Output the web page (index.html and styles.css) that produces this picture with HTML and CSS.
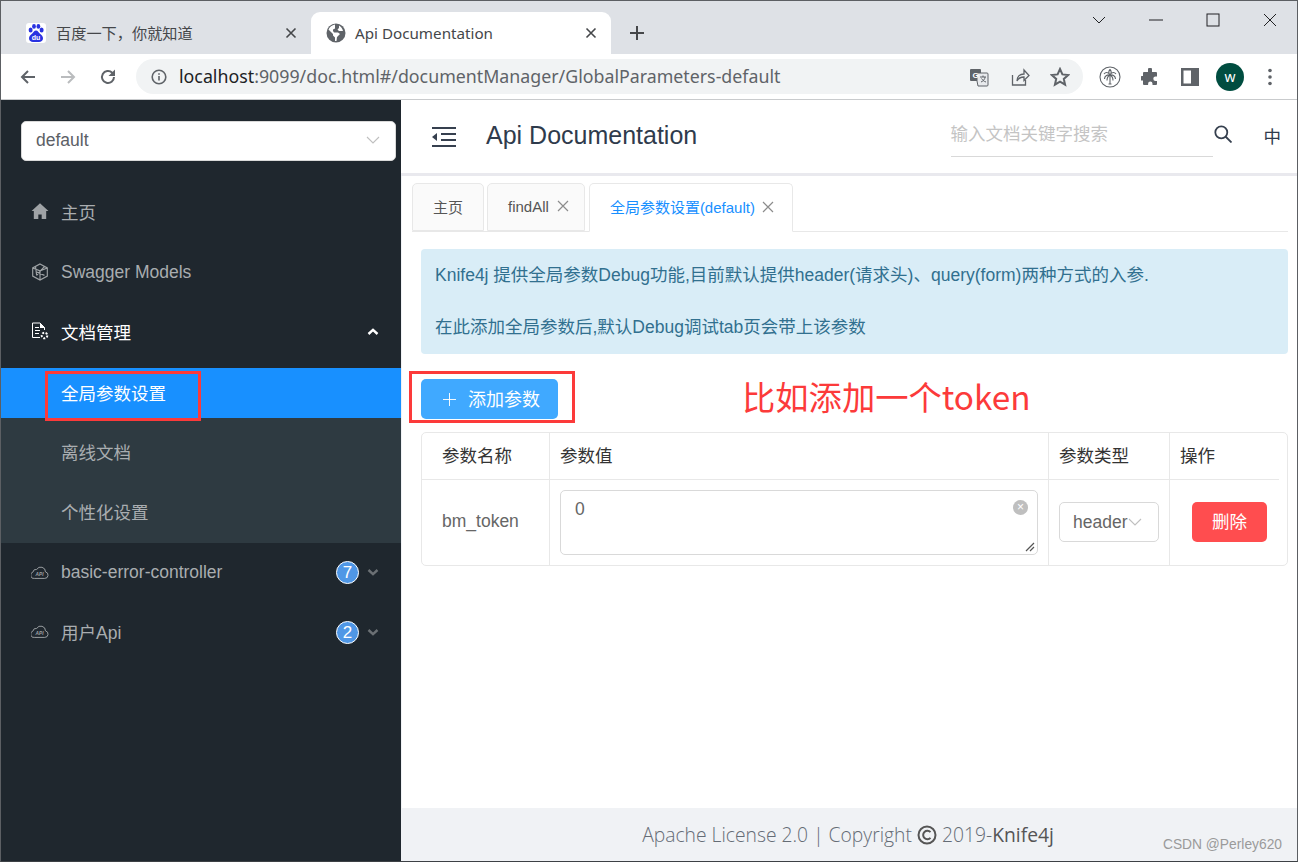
FILE: index.html
```html
<!DOCTYPE html>
<html lang="zh-CN">
<head>
    <meta charset="UTF-8">
    <title>Api Documentation</title>
    <link rel="stylesheet" href="styles.css">
</head>
<body>
<div class="window">
    <div class="tabstrip">
        <div class="tab">
            <svg class="favicon" viewBox="0 0 20 20"><rect width="20" height="20" rx="3" fill="#fff"/><g fill="#2932e1"><ellipse cx="4.6" cy="7" rx="2" ry="2.5"/><ellipse cx="8" cy="3.4" rx="1.9" ry="2.4"/><ellipse cx="12.4" cy="3.4" rx="1.9" ry="2.4"/><ellipse cx="15.6" cy="7" rx="2" ry="2.5"/><path d="M10 7.5c-2 0-2.6 2-4 3.2C4.400 12 3 13.200 3 15.200 3 17.800 5 19 7 19h6c2 0 4-1.200 4-3.800 0-2-1.400-3.200-3-4.500-1.400-1.200-2-3.200-4-3.200z"/></g><text x="10" y="17" class="favicon-du">du</text></svg>
            <span class="tab-title tab-title-cjk">百度一下，你就知道</span>
            <svg class="tab-close" viewBox="0 0 12 12"><path d="M1.500 1.500l9 9M10.500 1.500l-9 9"/></svg>
        </div>
        <div class="tab tab-active">
            <svg class="favicon" viewBox="0 0 20 20"><circle cx="10" cy="10" r="9.500" fill="#5f6368"/><path fill="#fff" d="M9 1.500C6 2 3.500 4 2.500 6.500L7 11v1.500l2 2V18h1.500l.5-4 3-3-2-1.500H8L7 8V6.500l2-1zM13 2.500v2.500l-1.500 1.500 1.500 1.500h4C16.500 5.500 15 3.500 13 2.500z"/></svg>
            <span class="tab-title">Api Documentation</span>
            <svg class="tab-close" viewBox="0 0 12 12"><path d="M1.500 1.500l9 9M10.500 1.500l-9 9"/></svg>
        </div>
        <svg class="new-tab" viewBox="0 0 16 16"><path d="M8 1v14M1 8h14"/></svg>
        <div class="win-controls">
            <svg viewBox="0 0 14 14"><path d="M1 4l6 6 6-6"/></svg>
            <svg viewBox="0 0 14 14"><path d="M0 7h14"/></svg>
            <svg viewBox="0 0 14 14"><rect x="1" y="1" width="12" height="12"/></svg>
            <svg viewBox="0 0 14 14"><path d="M1 1l12 12M13 1L1 13"/></svg>
        </div>
    </div>
    <div class="toolbar">
        <div class="tool"><svg viewBox="0 0 18 18"><path class="ink" d="M16 9H3M9 3L3 9l6 6"/></svg></div>
        <div class="tool"><svg viewBox="0 0 18 18"><path class="ink faded" d="M2 9h13M9 3l6 6-6 6"/></svg></div>
        <div class="tool"><svg viewBox="0 0 18 18"><path class="ink" d="M15 9a6 6 0 1 1-1.800-4.300L15 6.500"/><path class="fill" d="M16 1.500V8h-6.500z"/></svg></div>
        <div class="address">
            <svg class="info" viewBox="0 0 16 16"><circle cx="8" cy="8" r="6.800"/><path d="M8 7v4.500M8 4.200v1.600"/></svg>
            <span class="url"><b>localhost</b>:9099/doc.html#/documentManager/GlobalParameters-default</span>
            <div class="addr-icons">
                <svg viewBox="0 0 20 20"><rect x="1" y="2" width="11" height="12" rx="1" fill="#5f6368"/><path d="M8 6h10a1 1 0 0 1 1 1v11a1 1 0 0 1-1 1H9l-1-5z" fill="#e8eaed" stroke="#5f6368"/><text x="6.500" y="11" class="g-letter">G</text><path d="M11 10h6M14 8.500V10M12 15c2.500-1 4-3 4-5M12.500 11.500c1 1.500 2.500 3 4.500 3.500" fill="none" stroke="#5f6368"/></svg>
                <svg viewBox="0 0 20 20"><path class="ink thin" d="M2.500 8v10h13v-5M7 14c0-4.500 3-7 7-7V3l5 5.500-5 5V10c-3 0-5.500 1-7 4z"/></svg>
                <svg viewBox="0 0 20 20"><path class="ink" d="M10 2l2.400 5.400 5.800.6-4.400 3.900 1.300 5.800L10 14.700l-5.100 3 1.300-5.800L1.800 8l5.800-.6z"/></svg>
            </div>
        </div>
        <div class="tool"><svg viewBox="0 0 22 22"><circle class="thin-line" cx="11" cy="11" r="10"/><path class="thin-line" d="M11 9v9M9.500 18h3M11 9C9 5.500 6.500 6 5 8M11 9c2-3.500 4.500-3 6-1M11 9C8 8.500 5.500 10 5.500 13M11 9c3-.5 5.500 1 5.500 4M11 9c-1.500-2-1.500-4 0-5.500M11 9c1.500-2 1.500-4 0-5.500M11 9c-2 1-3 3-3 5.500M11 9c2 1 3 3 3 5.500"/></svg></div>
        <div class="tool"><svg viewBox="0 0 18 18"><path class="fill" d="M7 1.500a2 2 0 0 1 4 0V4h4a1 1 0 0 1 1 1v3.500h-1.500a2.200 2.200 0 0 0 0 4.400H16V16a1 1 0 0 1-1 1h-3.500v-1.300a2.200 2.200 0 0 0-4.400 0V17H3a1 1 0 0 1-1-1v-3.500H.8a2.200 2.200 0 0 1 0-4.400H2V5a1 1 0 0 1 1-1h4z"/></svg></div>
        <div class="tool"><svg viewBox="0 0 18 18"><path class="fill" fill-rule="evenodd" d="M0 0h18v18H0zM2.500 2.500v13H10v-13z"/></svg></div>
        <div class="tool"><span class="avatar">w</span></div>
        <div class="tool"><svg viewBox="0 0 18 18"><circle class="fill" cx="9" cy="2.500" r="1.800"/><circle class="fill" cx="9" cy="9" r="1.800"/><circle class="fill" cx="9" cy="15.500" r="1.800"/></svg></div>
    </div>
    <div class="app">
        <aside class="sidebar">
            <div class="project-select">
                <span>default</span>
                <svg class="chevron-thin" viewBox="0 0 14 8"><path d="M1 1l6 6 6-6"/></svg>
            </div>
            <ul class="menu">
                <li class="menu-item menu-cjk">
                    <svg class="menu-icon" viewBox="0 0 16 16"><path class="solid" d="M8 1L0.500 8H2.500v7h4v-4h3v4h4V8h2z"/></svg>
                    主页
                </li>
                <li class="menu-item">
                    <svg class="menu-icon" viewBox="0 0 16 16"><path class="line" d="M8 .8l6.500 3.600v7.200L8 15.200l-6.500-3.600V4.400zM1.500 4.400L8 7l6.500-2.600M8 7v8M4 3L5 11M12 3l-7 8M5 8l7 3"/></svg>
                    Swagger Models
                </li>
                <li class="menu-item menu-cjk menu-open">
                    <svg class="menu-icon" viewBox="0 0 18 18"><path class="line white" d="M9 15.500H1.500V1H9l4.500 4.500V8M4 5.500h4M4 8.500h5M4 11.500h4"/><path class="solid white" d="M9 1v5h5z"/><circle class="line white gear" cx="13.500" cy="13.500" r="2.800"/></svg>
                    文档管理
                    <svg class="menu-arrow white-arrow" viewBox="0 0 12 8"><path d="M1.500 6L6 1.800 10.500 6"/></svg>
                </li>
                <li class="submenu">
                    <div class="sub-item sub-active"><span class="mark">全局参数设置</span></div>
                    <div class="sub-item">离线文档</div>
                    <div class="sub-item">个性化设置</div>
                </li>
                <li class="menu-item">
                    <svg class="menu-icon cloud" viewBox="1 0 19 13.500"><path class="line" d="M5 13h10.500a3.500 3.500 0 0 0 .8-6.900A5 5 0 0 0 7 3.500a3.500 3.500 0 0 0-4 2.800A3.500 3.500 0 0 0 5 13z"/><text x="10" y="10.500" class="cloud-text">API</text></svg>
                    basic-error-controller
                    <span class="count">7</span>
                    <svg class="menu-arrow" viewBox="0 0 12 8"><path d="M1.500 2L6 6.200 10.500 2"/></svg>
                </li>
                <li class="menu-item menu-cjk">
                    <svg class="menu-icon cloud" viewBox="1 0 19 13.500"><path class="line" d="M5 13h10.500a3.500 3.500 0 0 0 .8-6.900A5 5 0 0 0 7 3.500a3.500 3.500 0 0 0-4 2.800A3.500 3.500 0 0 0 5 13z"/><text x="10" y="10.500" class="cloud-text">API</text></svg>
                    用户Api
                    <span class="count">2</span>
                    <svg class="menu-arrow" viewBox="0 0 12 8"><path d="M1.500 2L6 6.200 10.500 2"/></svg>
                </li>
            </ul>
        </aside>
        <main class="main">
            <header class="topbar">
                <svg class="collapse" viewBox="0 0 24 20"><path d="M0 1h24M9 7h15M9 13h15M0 19h24" /><path class="arrow" d="M5 6v8L0 10z"/></svg>
                <h1 class="app-title">Api Documentation</h1>
                <div class="search">输入文档关键字搜索</div>
                <svg class="search-icon" viewBox="0 0 18 18"><circle cx="7.300" cy="7.300" r="6"/><path d="M11.500 11.500l6 6"/></svg>
                <span class="lang">中</span>
            </header>
            <div class="content">
                <div class="tabs">
                    <div class="page-tab">主页</div>
                    <div class="page-tab page-tab-close">findAll <svg class="x" viewBox="0 0 12 12"><path d="M1 1l10 10M11 1L1 11"/></svg></div>
                    <div class="page-tab page-tab-active">全局参数设置(default) <svg class="x" viewBox="0 0 12 12"><path d="M1 1l10 10M11 1L1 11"/></svg></div>
                </div>
                <div class="pane">
                    <div class="alert">
                        <p>Knife4j 提供全局参数Debug功能,目前默认提供header(请求头)、query(form)两种方式的入参.</p>
                        <p>在此添加全局参数后,默认Debug调试tab页会带上该参数</p>
                    </div>
                    <div class="actions">
                        <div class="btn-mark">
                            <button class="btn-add"><svg viewBox="0 0 14 14"><path d="M7 0v14M0 7h14"/></svg><span class="btn-add-text">添加参数</span></button>
                        </div>
                        <span class="note">比如添加一个token</span>
                    </div>
                    <div class="param-table">
                        <div class="cell cell-head">参数名称</div>
                        <div class="cell cell-head">参数值</div>
                        <div class="cell cell-head">参数类型</div>
                        <div class="cell cell-head">操作</div>
                        <div class="cell cell-name">bm_token</div>
                        <div class="cell cell-value">
                            <div class="textarea">
                                0
                                <span class="clear">×</span>
                                <svg class="resize" viewBox="0 0 10 10"><path d="M1 9l8-8M5 9l4-4"/></svg>
                            </div>
                        </div>
                        <div class="cell cell-type">
                            <div class="type-select">header<svg class="chevron-thin" viewBox="0 0 14 8"><path d="M1 1l6 6 6-6"/></svg></div>
                        </div>
                        <div class="cell cell-op"><button class="btn-del">删除</button></div>
                    </div>
                </div>
            </div>
            <footer class="footer">
                <span>Apache License 2.0 | Copyright <svg class="copy" viewBox="0 0 20 20"><circle cx="10" cy="10" r="8.500"/><path d="M13.500 7.200a4.200 4.200 0 1 0 0 5.600"/></svg> 2019-<em>Knife4j</em></span>
                <span class="watermark">CSDN @Perley620</span>
            </footer>
        </main>
    </div>
</div>
</body>
</html>
```
FILE: styles.css
```css
* {
    box-sizing: border-box;
}
html, body {
    margin: 0;
    height: 100%;
    overflow: hidden;
}
body {
    font-family: "Liberation Sans", "Noto Sans CJK SC", sans-serif;
    font-size: 17.5px;
    background: #fff;
}
ul {
    list-style: none;
    margin: 0;
    padding: 0;
}
p {
    margin: 0;
}
button {
    font-family: inherit;
    border: 0;
}
.window {
    width: 1298px;
    height: 862px;
    display: flex;
    flex-direction: column;
    border-top: 1px solid #5c5f63;
    border-left: 1px solid #5c5f63;
    border-right: 1px solid #5c5f63;
    border-bottom: 1px solid #3d4145;
}

/* browser chrome */
.tabstrip {
    height: 53px;
    flex: none;
    background: #dee1e6;
    display: flex;
    align-items: flex-end;
    padding-left: 25px;
    font-family: "Noto Sans", "Noto Sans CJK SC", sans-serif;
    font-size: 15.2px;
    color: #45474a;
}
.tab {
    width: 285px;
    height: 42px;
    display: flex;
    align-items: center;
}
.tab-active {
    width: 300px;
    background: #fff;
    border-radius: 9px 9px 0 0;
    padding-left: 15px;
}
.tab-active .favicon {
    margin-right: 9px;
}
.favicon {
    width: 20px;
    height: 20px;
    flex: none;
    margin-right: 10px;
}
.favicon-du {
    font: bold 7px "Liberation Sans", sans-serif;
    fill: #fff;
    text-anchor: middle;
}
.tab-title {
    flex: 1;
}
.tab-title-cjk {
    padding-bottom: 2px;
}
.tab-close {
    width: 12px;
    height: 12px;
    fill: none;
    stroke: #45474a;
    stroke-width: 1.600;
    margin-right: 14px;
}
.new-tab {
    width: 16px;
    height: 16px;
    margin: 24px 0 5px 18px;
    align-self: flex-start;
    fill: none;
    stroke: #45474a;
    stroke-width: 2;
}
.win-controls {
    margin-left: auto;
    align-self: flex-start;
    display: flex;
    align-items: center;
    gap: 43px;
    padding: 12px 20px 0 0;
}
.win-controls svg {
    width: 14px;
    height: 14px;
    fill: none;
    stroke: #202124;
    stroke-width: 1;
}
.toolbar {
    height: 46px;
    flex: none;
    display: flex;
    align-items: center;
    padding: 0 7px;
    background: #fff;
    border-bottom: 1px solid #c9cbcd;
}
.tool {
    width: 40px;
    height: 40px;
    flex: none;
    display: flex;
    align-items: center;
    justify-content: center;
}
.tool svg {
    width: 18px;
    height: 18px;
}
.ink {
    fill: none;
    stroke: #5f6368;
    stroke-width: 2;
}
.ink.faded {
    stroke: #babcbe;
}
.ink.thin {
    stroke-width: 1.300;
}
.fill {
    fill: #5f6368;
}
.thin-line {
    fill: none;
    stroke: #5f6368;
    stroke-width: 1.100;
}
.tool svg:has(.thin-line) {
    width: 22px;
    height: 22px;
}
.address {
    flex: 1;
    height: 35px;
    margin: 0 7px 0 8px;
    border-radius: 18px;
    background: #f1f3f4;
    display: flex;
    align-items: center;
    padding-left: 15px;
    font-family: "Noto Sans", sans-serif;
    font-size: 17.8px;
    color: #5f6368;
}
.url {
    padding-bottom: 2px;
}
.url b {
    font-weight: 400;
    color: #202124;
}
.info {
    width: 16px;
    height: 16px;
    margin-right: 12px;
    fill: none;
    stroke: #5f6368;
    stroke-width: 1.600;
}
.addr-icons {
    margin-left: auto;
    display: flex;
    gap: 20px;
    padding-right: 13px;
}
.addr-icons svg {
    width: 20px;
    height: 20px;
}
.addr-icons svg:first-child {
    margin-right: 1px;
}
.g-letter {
    font: bold 8px "Liberation Sans", sans-serif;
    fill: #fff;
    text-anchor: middle;
}
.avatar {
    width: 28px;
    height: 28px;
    border-radius: 50%;
    background: #004d40;
    color: #fff;
    font-size: 14px;
    display: flex;
    align-items: center;
    justify-content: center;
    font-family: "Noto Sans", sans-serif;
}

/* app */
.app {
    flex: 1;
    display: flex;
    min-height: 0;
}
.sidebar {
    width: 400px;
    flex: none;
    background: #1f272e;
    padding-top: 21px;
    color: #a9adb0;
}
.project-select {
    height: 40px;
    margin: 0 5px 0 20px;
    background: #fff;
    border: 1px solid #d9d9d9;
    border-radius: 5px;
    display: flex;
    align-items: center;
    justify-content: space-between;
    padding: 0 15px 2px 14px;
    color: #5c6066;
}
.chevron-thin {
    width: 14px;
    height: 8px;
    fill: none;
    stroke: #bfbfbf;
    stroke-width: 1.100;
}
.menu {
    margin-top: 21px;
}
.menu-item {
    height: 60px;
    display: flex;
    align-items: center;
    padding-left: 30px;
    position: relative;
}
.menu-cjk {
    padding-bottom: 2px;
}
.menu-open {
    color: #fff;
}
.menu-icon {
    width: 18px;
    height: 18px;
    margin-right: 12px;
    flex: none;
}
.menu-icon.cloud {
    height: 13px;
}
.solid {
    fill: #9fa3a6;
}
.line {
    fill: none;
    stroke: #9fa3a6;
    stroke-width: 1;
}
.solid.white {
    fill: #fff;
}
.line.white {
    stroke: #fff;
}
.line.gear {
    stroke-width: 2;
    stroke-dasharray: 2 1.500;
}
.cloud-text {
    font: bold 5px "Liberation Sans", sans-serif;
    font-style: italic;
    fill: #9fa3a6;
    text-anchor: middle;
}
.menu-arrow {
    width: 12px;
    height: 8px;
    position: absolute;
    right: 22px;
    top: 26px;
    fill: none;
    stroke: #6b7074;
    stroke-width: 2.400;
}
.white-arrow {
    stroke: #fff;
}
.submenu {
    margin: 6px 0 -1px;
    padding-bottom: 6px;
    background: #2e3a41;
    display: flex;
    flex-direction: column;
    gap: 9.500px;
}
.sub-item {
    height: 50px;
    display: flex;
    align-items: center;
    padding: 0 0 2px 60px;
}
.sub-active {
    background: #1890ff;
    color: #fff;
}
.mark {
    position: relative;
}
.mark::after {
    content: "";
    position: absolute;
    left: -16px;
    right: -35px;
    top: -9px;
    bottom: -16px;
    border: 3px solid #fc3a3a;
}
.count {
    position: absolute;
    right: 42px;
    top: 19px;
    width: 23px;
    height: 23px;
    border-radius: 50%;
    background: #4f97e6;
    border: 1px solid #fff;
    color: #fff;
    font-size: 17px;
    display: flex;
    align-items: center;
    justify-content: center;
}
.main {
    flex: 1;
    min-width: 0;
    display: flex;
    flex-direction: column;
}
.topbar {
    height: 76px;
    flex: none;
    display: flex;
    align-items: center;
    border-bottom: 3px solid #e9e9ee;
    padding-left: 31px;
    color: #2f3b4c;
}
.collapse {
    width: 24px;
    height: 20px;
    flex: none;
    fill: none;
    stroke: #36404f;
    stroke-width: 2;
}
.collapse .arrow {
    fill: #36404f;
    stroke: none;
}
.app-title {
    margin: -2px 0 0 30px;
    font-size: 25px;
    font-weight: 400;
}
.search {
    margin: 2px 0 0 auto;
    width: 262px;
    height: 39px;
    padding-top: 2px;
    border-bottom: 1px solid #d9d9d9;
    color: #c4c4c4;
}
.search-icon {
    width: 18px;
    height: 18px;
    flex: none;
    margin: -5px 0 0 1px;
    fill: none;
    stroke: #36404f;
    stroke-width: 1.800;
}
.lang {
    margin: -3px 16px 0 32px;
}
.content {
    flex: 1;
    min-height: 0;
    padding: 7px 9px 0 10px;
    border-left: 1px solid #f0f2f5;
}
.tabs {
    height: 49px;
    display: flex;
    align-items: flex-end;
    gap: 3px;
    border-bottom: 1px solid #e8e8e8;
}
.page-tab {
    height: 48px;
    padding: 0 20px 2px;
    background: #fafafa;
    border: 1px solid #e8e8e8;
    border-radius: 5px 5px 0 0;
    font-size: 15px;
    color: #555;
    display: flex;
    align-items: center;
    gap: 6px;
}
.page-tab-close {
    padding-right: 15px;
    gap: 8px;
}
.page-tab-active {
    margin-left: 1px;
    margin-bottom: -1px;
    height: 49px;
    background: #fff;
    border-bottom-color: #fff;
    color: #1890ff;
    padding: 0 18px 2px 20px;
    gap: 7px;
}
.x {
    width: 12px;
    height: 12px;
    fill: none;
    stroke: #8c8c8c;
    stroke-width: 1.200;
}
.pane {
    padding: 17px 0 0 9px;
}
.alert {
    height: 105px;
    padding: 13px 14px;
    background: #d9edf7;
    border-radius: 4px;
    color: #31708f;
    display: flex;
    flex-direction: column;
    gap: 26px;
    line-height: 26px;
}
.actions {
    display: flex;
    align-items: center;
    height: 40px;
    margin-top: 25px;
}
.btn-mark {
    position: relative;
}
.btn-mark::after {
    content: "";
    position: absolute;
    inset: -8px -17px -4px -12px;
    border: 3px solid #fc3a3a;
    pointer-events: none;
}
.btn-add {
    width: 137px;
    height: 40px;
    background: #40a9ff;
    border-radius: 5px;
    color: #fff;
    font-size: 18px;
    display: flex;
    align-items: center;
    padding-left: 22px;
}
.btn-add-text {
    padding-bottom: 3px;
}
.btn-add svg {
    width: 13px;
    height: 13px;
    margin-right: 12px;
    fill: none;
    stroke: #fff;
    stroke-width: 1;
}
.note {
    margin: 0 0 8px 184px;
    font-family: "Noto Sans CJK SC", sans-serif;
    font-size: 33.3px;
    color: #fc3a3a;
}
.param-table {
    margin-top: 13px;
    display: grid;
    grid-template-columns: 128px 499px 121px 119px;
    grid-template-rows: 47px 85px;
    border: 1px solid #e8e8e8;
    border-radius: 5px;
}
.cell {
    border-right: 1px solid #e8e8e8;
    padding: 0 10px;
    display: flex;
    align-items: center;
    color: #333;
}
.cell:nth-child(4n) {
    border-right: 0;
}
.cell-head {
    border-bottom: 1px solid #e8e8e8;
    padding-bottom: 4px;
}
.cell-head:first-child {
    padding-left: 20px;
}
.cell-head:nth-child(4) {
    margin-right: 10px;
}
.cell-name {
    padding: 0 0 3px 20px;
    color: #666;
}
.textarea {
    width: 100%;
    height: 65px;
    border: 1px solid #d9d9d9;
    border-radius: 5px;
    padding: 8px 14px;
    color: #666;
    position: relative;
}
.clear {
    position: absolute;
    right: 9px;
    top: 9px;
    width: 15px;
    height: 15px;
    border-radius: 50%;
    background: #bfbfbf;
    color: #fff;
    font-size: 12px;
    line-height: 15px;
    text-align: center;
}
.resize {
    position: absolute;
    right: 2px;
    bottom: 2px;
    width: 10px;
    height: 10px;
    fill: none;
    stroke: #555;
    stroke-width: 1.200;
}
.cell-type, .cell-op {
    padding-bottom: 1px;
}
.type-select {
    width: 100px;
    height: 40px;
    border: 1px solid #d9d9d9;
    border-radius: 5px;
    display: flex;
    align-items: center;
    padding-left: 13px;
    color: #666;
}
.cell-op {
    padding-left: 22px;
}
.btn-del {
    width: 75px;
    height: 40px;
    padding: 0 0 3px;
    background: #ff4d4f;
    border-radius: 5px;
    color: #fff;
    font-size: 17.500px;
}
.footer {
    height: 53px;
    flex: none;
    background: #f0f2f5;
    position: relative;
    font-family: "Open Sans", sans-serif;
    font-weight: 300;
    font-size: 19.3px;
    color: #656c75;
    display: flex;
    align-items: center;
    justify-content: center;
    padding-right: 2px;
}
.footer em {
    font-style: normal;
    font-weight: 400;
    color: #555;
}
.copy {
    width: 20px;
    height: 20px;
    vertical-align: -3px;
    fill: none;
    stroke: #555;
    stroke-width: 2;
}
.watermark {
    position: absolute;
    right: 15px;
    bottom: 9px;
    font-family: "Liberation Sans", sans-serif;
    font-weight: 400;
    font-size: 13.8px;
    color: #9a9a9a;
}
```
